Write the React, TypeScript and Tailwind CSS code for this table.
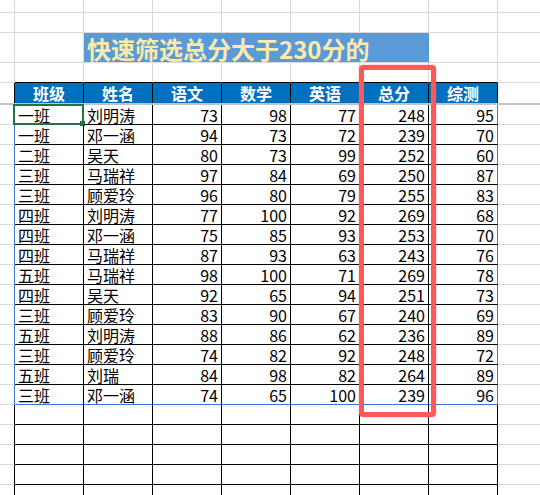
import React from "react";

const headers = ["班级", "姓名", "语文", "数学", "英语", "总分", "综测"];
const data: (string | number)[][] = [
  ["一班", "刘明涛", 73, 98, 77, 248, 95],
  ["一班", "邓一涵", 94, 73, 72, 239, 70],
  ["二班", "吴天", 80, 73, 99, 252, 60],
  ["三班", "马瑞祥", 97, 84, 69, 250, 87],
  ["三班", "顾爱玲", 96, 80, 79, 255, 83],
  ["四班", "刘明涛", 77, 100, 92, 269, 68],
  ["四班", "邓一涵", 75, 85, 93, 253, 70],
  ["四班", "马瑞祥", 87, 93, 63, 243, 76],
  ["五班", "马瑞祥", 98, 100, 71, 269, 78],
  ["四班", "吴天", 92, 65, 94, 251, 73],
  ["三班", "顾爱玲", 83, 90, 67, 240, 69],
  ["五班", "刘明涛", 88, 86, 62, 236, 89],
  ["三班", "顾爱玲", 74, 82, 92, 248, 72],
  ["五班", "刘瑞", 84, 98, 82, 264, 89],
  ["三班", "邓一涵", 74, 65, 100, 239, 96],
];

const R_LIGHT = "border-r-[#dadada]";
const R_BLACK = "border-r-black";
const R_BLUE = "border-r-[#3b74d4]";
const B_LIGHT = "border-b-[#dadada]";
const B_BLACK = "border-b-black";
const B_BLUE = "border-b-[#3b74d4]";
const B_NONE = "border-b-0";

function Cell({
  w,
  r,
  b,
  className = "",
  children,
}: {
  w: string;
  r: string;
  b: string;
  className?: string;
  children?: React.ReactNode;
}) {
  return (
    <div className={`box-border h-full shrink-0 border-r border-b border-solid ${w} ${r} ${b} ${className}`}>
      {children}
    </div>
  );
}

function PlainRow({ h, tableBottom }: { h: string; tableBottom: boolean }) {
  const cols = [0, 1, 2, 3, 4, 5, 6];
  return (
    <div className={`flex ${h}`}>
      <Cell w="w-[15px]" r={R_LIGHT} b={B_LIGHT} />
      {cols.map((i) => (
        <Cell key={i} w="w-[69px]" r={R_LIGHT} b={tableBottom ? B_BLACK : B_LIGHT} />
      ))}
      <Cell w="w-[69px]" r={R_LIGHT} b={B_LIGHT} />
    </div>
  );
}

export default function App() {
  return (
    <div className="relative h-[495px] w-[540px] overflow-hidden bg-white font-['Noto_Sans_CJK_SC','Noto_Sans',sans-serif] text-black">
      <div className="flex w-[567px] flex-col">
        <PlainRow h="h-[13px]" tableBottom={false} />
        <PlainRow h="h-[20px]" tableBottom={false} />
        {/* title row */}
        <div className="flex h-[30px]">
          <Cell w="w-[15px]" r={R_LIGHT} b={B_LIGHT} />
          <Cell w="w-[69px]" r={R_LIGHT} b={B_LIGHT} />
          <Cell
            w="w-[345px]"
            r="border-r-[#5b9bd5]"
            b={B_LIGHT}
            className="flex items-center bg-[#5b9bd5] pl-[3px] pt-[3px]"
          >
            <span className="text-[24px] font-bold leading-[24px] text-[#fde9a9]">快速筛选总分大于230分的</span>
          </Cell>
          <Cell w="w-[69px]" r={R_LIGHT} b={B_LIGHT} />
          <Cell w="w-[69px]" r={R_LIGHT} b={B_LIGHT} />
        </div>
        <PlainRow h="h-[20px]" tableBottom={true} />
        {/* header row */}
        <div className="flex h-[20px]">
          <Cell w="w-[15px]" r={R_BLACK} b={B_NONE} />
          {headers.map((t) => (
            <Cell
              key={t}
              w="w-[69px]"
              r={R_BLACK}
              b={B_NONE}
              className="flex items-center justify-center bg-[#0070c0] text-[16px] font-bold leading-none text-white"
            >
              {t}
            </Cell>
          ))}
          <Cell w="w-[69px]" r={R_LIGHT} b={B_NONE} />
        </div>
        <div className="h-[2px] w-full bg-[#c3c3c3]" />
        {/* data rows */}
        {data.map((row, ri) => {
          const last = ri === data.length - 1;
          return (
            <div key={ri} className="flex h-[20px]">
              <Cell w="w-[15px]" r={R_BLUE} b={B_LIGHT} />
              {row.map((v, ci) => {
                const isNum = typeof v === "number";
                return (
                  <Cell
                    key={ci}
                    w="w-[69px]"
                    r={ci === 6 ? R_BLUE : R_BLACK}
                    b={last ? B_BLUE : B_BLACK}
                    className={`relative flex items-center text-[16px] leading-none ${
                      isNum ? "justify-end pr-[3px]" : "justify-start pl-[3px]"
                    }`}
                  >
                    {v}
                    {ri === 0 && ci === 0 && (
                      <div className="pointer-events-none absolute -left-[2px] -top-[1px] h-[21px] w-[71px] border-2 border-solid border-[#217346]">
                        <div className="absolute -bottom-[3px] -right-[3px] h-[5px] w-[5px] bg-[#217346]" />
                      </div>
                    )}
                  </Cell>
                );
              })}
              <Cell w="w-[69px]" r={R_LIGHT} b={B_LIGHT} />
            </div>
          );
        })}
        {/* empty table rows */}
        {[0, 1, 2, 3, 4].map((i) => (
          <div key={i} className="flex h-[20px]">
            <Cell w="w-[15px]" r={R_BLACK} b={B_LIGHT} />
            {[0, 1, 2, 3, 4, 5, 6].map((c) => (
              <Cell key={c} w="w-[69px]" r={R_BLACK} b={B_BLACK} />
            ))}
            <Cell w="w-[69px]" r={R_LIGHT} b={B_LIGHT} />
          </div>
        ))}
      </div>
      {/* red highlight box */}
      <div className="pointer-events-none absolute left-[359px] top-[65px] h-[352px] w-[77px] rounded-[4px] border-[5px] border-solid border-[#ff5858] shadow-[0_0_2px_rgba(255,88,88,0.6)]" />
    </div>
  );
}
